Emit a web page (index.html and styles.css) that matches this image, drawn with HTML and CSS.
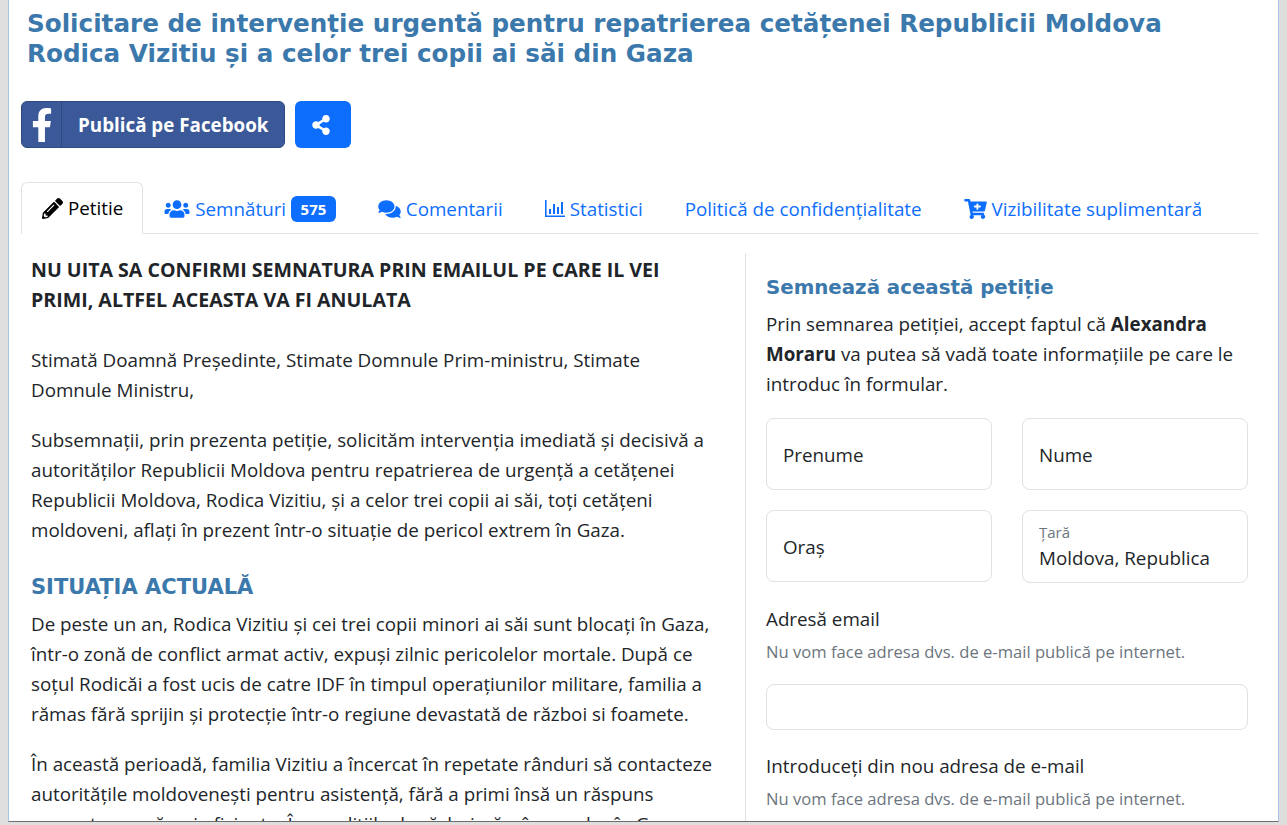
FILE: index.html
```html
<!DOCTYPE html>
<html>
<head>
  <meta charset="UTF-8">
  <title>Solicitare de intervenție urgentă</title>
  <link rel="stylesheet" href="styles.css">
</head>
<body>
  <div class="page">
    <h1 class="title">Solicitare de intervenție urgentă pentru repatrierea cetățenei Republicii Moldova Rodica Vizitiu și a celor trei copii ai săi din Gaza</h1>

    <div class="share-row">
      <a class="btn-fb" href="#">
        <span class="fb-icon">
          <svg viewBox="0 0 320 512" width="22" height="34"><path fill="#fff" d="M279.14 288l14.22-92.66h-88.91v-60.13c0-25.35 12.42-50.06 52.24-50.06h40.42V6.26S260.43 0 225.36 0c-73.22 0-121.08 44.38-121.08 124.72v70.62H22.89V288h81.39v224h100.17V288z"/></svg>
        </span>
        <span class="fb-text">Publică pe Facebook</span>
      </a>
      <a class="btn-share" href="#">
        <svg viewBox="0 0 448 512" width="18" height="20"><path fill="#fff" d="M352 320c-22.608 0-43.387 7.819-59.79 20.895l-102.486-64.054a96.551 96.551 0 0 0 0-41.683l102.486-64.054C308.613 184.181 329.392 192 352 192c53.019 0 96-42.981 96-96S405.019 0 352 0s-96 42.981-96 96c0 7.158.79 14.13 2.276 20.841L155.79 180.895C139.387 167.819 118.608 160 96 160c-53.019 0-96 42.981-96 96s42.981 96 96 96c22.608 0 43.387-7.819 59.79-20.895l102.486 64.054A96.301 96.301 0 0 0 256 416c0 53.019 42.981 96 96 96s96-42.981 96-96-42.981-96-96-96z"/></svg>
      </a>
    </div>

    <ul class="tabs">
      <li class="tab active">
        <svg class="icon" viewBox="0 0 512 512" width="21" height="21"><path fill="#000" d="M497.9 142.1l-46.1 46.1c-4.7 4.7-12.3 4.7-17 0l-111-111c-4.7-4.7-4.7-12.3 0-17l46.1-46.1c18.7-18.7 49.1-18.7 67.9 0l60.1 60.1c18.8 18.7 18.8 49.1 0 67.9zM284.2 99.8L21.6 362.4.4 483.9c-2.9 16.4 11.4 30.6 27.8 27.8l121.5-21.3 262.6-262.6c4.7-4.7 4.7-12.3 0-17l-111-111c-4.8-4.7-12.4-4.7-17.1 0zM124.1 339.9c-5.5-5.5-5.5-14.3 0-19.8l154-154c5.5-5.5 14.3-5.5 19.8 0s5.5 14.3 0 19.8l-154 154c-5.5 5.5-14.3 5.5-19.8 0zM88 424h48v36.3l-64.5 11.3-31.1-31.1L51.7 376H88v48z"/></svg>
        Petitie
      </li>
      <li class="tab">
        <svg class="icon" viewBox="0 0 640 512" width="26" height="20"><path fill="currentColor" d="M96 224c35.3 0 64-28.7 64-64s-28.7-64-64-64-64 28.7-64 64 28.7 64 64 64zm448 0c35.3 0 64-28.7 64-64s-28.7-64-64-64-64 28.7-64 64 28.7 64 64 64zm32 32h-64c-17.6 0-33.5 7.1-45.1 18.6 40.3 22.1 68.9 62 75.1 109.4h66c17.7 0 32-14.3 32-32v-32c0-35.3-28.7-64-64-64zm-256 0c61.9 0 112-50.1 112-112S381.9 32 320 32 208 82.1 208 144s50.1 112 112 112zm76.8 32h-8.3c-20.8 10-43.9 16-68.5 16s-47.6-6-68.5-16h-8.3C179.6 288 128 339.6 128 403.2V432c0 26.5 21.5 48 48 48h288c26.5 0 48-21.5 48-48v-28.8c0-63.6-51.6-115.2-115.2-115.2zm-223.7-13.4C161.5 263.1 145.6 256 128 256H64c-35.3 0-64 28.7-64 64v32c0 17.7 14.3 32 32 32h65.9c6.3-47.4 34.9-87.3 75.2-109.4z"/></svg>
        Semnături <span class="badge">575</span>
      </li>
      <li class="tab">
        <svg class="icon" viewBox="0 0 576 512" width="23" height="20"><path fill="currentColor" d="M416 192c0-88.4-93.1-160-208-160S0 103.6 0 192c0 34.3 14.1 65.9 38 92-13.4 30.2-35.5 54.2-35.8 54.5-2.2 2.3-2.8 5.7-1.5 8.7S4.8 352 8 352c36.6 0 66.9-12.3 88.7-25 32.2 15.7 70.3 25 111.3 25 114.9 0 208-71.6 208-160zm122 220c23.9-26 38-57.7 38-92 0-66.9-53.5-124.2-129.3-148.1.9 6.6 1.3 13.3 1.3 20.1 0 105.9-107.7 192-240 192-10.8 0-21.3-.8-31.7-1.9C207.8 439.6 281.8 480 368 480c41 0 79.1-9.2 111.3-25 21.8 12.7 52.1 25 88.7 25 3.2 0 6.1-1.9 7.3-4.8 1.3-2.9.7-6.3-1.5-8.7-.3-.3-22.4-24.2-35.8-54.5z"/></svg>
        Comentarii
      </li>
      <li class="tab">
        <svg class="icon" viewBox="0 0 20 17" width="20" height="17"><path fill="currentColor" d="M0 0h1.6v15.4H20V17H0zM4 9h2v5H4zM8 4h2v10H8zM12 7h2v7h-2zM16 2h2v12h-2z"/></svg>
        Statistici
      </li>
      <li class="tab tab-plain">Politică de confidențialitate</li>
      <li class="tab">
        <svg class="icon" viewBox="0 0 576 512" width="23" height="20"><path fill="currentColor" d="M504.717 320H211.572l6.545 32h268.418c15.401 0 26.816 14.301 23.403 29.319l-5.517 24.276C523.112 414.668 536 433.828 536 456c0 31.202-25.519 56.444-56.824 55.994-29.823-.429-54.35-24.631-55.155-54.447-.44-16.287 6.085-31.049 16.803-41.548H231.176C241.553 426.165 248 440.326 248 456c0 31.813-26.528 57.431-58.67 55.938-28.54-1.325-51.751-24.385-53.251-52.917-1.158-22.034 10.436-41.455 28.051-51.586L93.883 64H24C10.745 64 0 53.255 0 40V24C0 10.745 10.745 0 24 0h102.529c11.401 0 21.228 8.021 23.513 19.19L159.208 64H551.99c15.401 0 26.816 14.301 23.403 29.319l-47.273 208C525.637 312.246 515.923 320 504.717 320zM408 168h-48v-40c0-8.837-7.163-16-16-16h-16c-8.837 0-16 7.163-16 16v40h-48c-8.837 0-16 7.163-16 16v16c0 8.837 7.163 16 16 16h48v40c0 8.837 7.163 16 16 16h16c8.837 0 16-7.163 16-16v-40h48c8.837 0 16-7.163 16-16v-16c0-8.837-7.163-16-16-16z"/></svg>
        Vizibilitate suplimentară
      </li>
    </ul>

    <div class="columns">
      <div class="petition">
        <p class="notice">NU UITA SA CONFIRMI SEMNATURA PRIN EMAILUL PE CARE IL VEI PRIMI, ALTFEL ACEASTA VA FI ANULATA</p>
        <p>Stimată Doamnă Președinte, Stimate Domnule Prim-ministru, Stimate Domnule Ministru,</p>
        <p>Subsemnații, prin prezenta petiție, solicităm intervenția imediată și decisivă a autorităților Republicii Moldova pentru repatrierea de urgență a cetățenei Republicii Moldova, Rodica Vizitiu, și a celor trei copii ai săi, toți cetățeni moldoveni, aflați în prezent într-o situație de pericol extrem în Gaza.</p>
        <h3 class="section-title">SITUAȚIA ACTUALĂ</h3>
        <p>De peste un an, Rodica Vizitiu și cei trei copii minori ai săi sunt blocați în Gaza, într-o zonă de conflict armat activ, expuși zilnic pericolelor mortale. După ce soțul Rodicăi a fost ucis de catre IDF în timpul operațiunilor militare, familia a rămas fără sprijin și protecție într-o regiune devastată de război si foamete.</p>
        <p>În această perioadă, familia Vizitiu a încercat în repetate rânduri să contacteze autoritățile moldovenești pentru asistență, fără a primi însă un răspuns concret sau măsuri eficiente. În condițiile de război, rămânerea lor în Gaza</p>
      </div>

      <form class="sign-form">
        <h3 class="form-title">Semnează această petiție</h3>
        <p class="consent">Prin semnarea petiției, accept faptul că <strong>Alexandra Moraru</strong> va putea să vadă toate informațiile pe care le introduc în formular.</p>
        <div class="field-grid">
          <div class="field">Prenume</div>
          <div class="field">Nume</div>
          <div class="field">Oraș</div>
          <div class="field field-select">
            <span class="field-label">Țară</span>
            <span>Moldova, Republica</span>
          </div>
        </div>
        <label class="email-label">Adresă email</label>
        <div class="hint">Nu vom face adresa dvs. de e-mail publică pe internet.</div>
        <input class="email-input" type="email">
        <label class="email-label">Introduceți din nou adresa de e-mail</label>
        <div class="hint">Nu vom face adresa dvs. de e-mail publică pe internet.</div>
      </form>
    </div>
  </div>
</body>
</html>
```

FILE: styles.css
```css
html, body {
  height: 100%;
  margin: 0;
  overflow: hidden;
}
body {
  background: #dedede;
  font-family: "Open Sans", "Liberation Sans", sans-serif;
  font-size: 18.8px;
  line-height: 30px;
  color: #212529;
}
.page {
  box-sizing: border-box;
  height: 822px;
  margin: 0 8px;
  padding: 9px 20px 0 12px;
  background: #fff;
  border-left: 1px solid #a6c5e6;
  border-right: 1px solid #a6c5e6;
  border-bottom: 1px solid #6e6e6e;
  overflow: hidden;
}
.title {
  margin: 0 0 32px 6px;
  font-family: "DejaVu Sans", Verdana, sans-serif;
  font-size: 24.65px;
  line-height: 30px;
  font-weight: bold;
  color: #3b78ab;
}

/* share buttons */
.share-row {
  display: flex;
  gap: 10px;
  height: 47px;
}
.btn-fb {
  display: flex;
  width: 264px;
  box-sizing: border-box;
  background: #3b5998;
  border: 1px solid #2f4a80;
  border-radius: 6px;
  color: #fff;
  text-decoration: none;
  font-weight: bold;
}
.fb-icon {
  display: flex;
  align-items: center;
  justify-content: center;
  width: 39px;
  border-right: 1px solid #2f4a80;
}
.fb-text {
  padding-left: 16px;
  line-height: 47px;
}
.btn-share {
  display: flex;
  align-items: center;
  justify-content: center;
  box-sizing: border-box;
  width: 56px;
  padding-right: 4px;
  background: #0d6efd;
  border-radius: 6px;
}

/* tabs */
.tabs {
  display: flex;
  list-style: none;
  margin: 34px 0 0;
  padding: 0;
  height: 51px;
  border-bottom: 1px solid #dee2e6;
}
.tab {
  display: flex;
  align-items: center;
  gap: 5px;
  height: 53px;
  padding: 0 21px;
  color: #0d6efd;
  white-space: nowrap;
}
.tab-plain {
  padding: 0 21px;
}
.tab.active {
  box-sizing: border-box;
  height: 52px;
  padding: 0 19px 0 20px;
  background: #fff;
  color: #000;
  border: 1px solid #dee2e6;
  border-bottom-color: #fff;
  border-radius: 6px 6px 0 0;
}
.badge {
  padding: 0 9.5px;
  background: #0d6efd;
  color: #fff;
  border-radius: 6px;
  font-size: 15px;
  font-weight: bold;
  line-height: 26px;
}

/* two columns under the tabs */
.columns {
  display: grid;
  grid-template-columns: 724px 1fr;
  margin-top: 19px;
}
.petition {
  padding: 2px 24px 0 10px;
}
.petition p {
  margin: 0 0 20px;
}
.petition .notice {
  margin-bottom: 30px;
  font-size: 19.6px;
  font-weight: bold;
}
.section-title {
  margin: 27px 0 7px;
  font-family: "DejaVu Sans", Verdana, sans-serif;
  font-size: 21px;
  line-height: 30px;
  font-weight: bold;
  color: #3b78ab;
}
.sign-form {
  padding: 20px 10px 0 20px;
  border-left: 1px solid #dee2e6;
}
.form-title {
  margin: 0 0 6px;
  font-family: "DejaVu Sans", Verdana, sans-serif;
  font-size: 19.8px;
  line-height: 30px;
  font-weight: bold;
  color: #3b78ab;
}
.consent {
  margin: 0 0 19px;
}
.field-grid {
  display: grid;
  grid-template-columns: 226px 226px;
  column-gap: 30px;
  row-gap: 20px;
}
.field {
  box-sizing: border-box;
  display: flex;
  flex-direction: column;
  justify-content: center;
  height: 72px;
  padding: 2px 16px 0;
  border: 1px solid #dee2e6;
  border-radius: 8px;
  color: #212529;
}
.field-select {
  height: 73px;
  padding-top: 0;
}
.field-label {
  font-size: 15px;
  line-height: 22px;
  color: #6c757d;
}
.email-label {
  display: block;
  margin-top: 21px;
}
.hint {
  margin-top: 3px;
  font-size: 16.6px;
  line-height: 30px;
  color: #6c757d;
}
.email-input {
  display: block;
  box-sizing: border-box;
  width: 482px;
  height: 46px;
  margin-top: 17px;
  margin-bottom: 21px;
  border: 1px solid #dee2e6;
  border-radius: 8px;
}
```
